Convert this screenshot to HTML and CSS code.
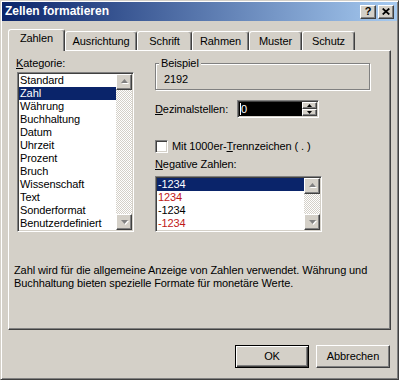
FILE: index.html
```html
<!DOCTYPE html>
<html lang="de">
  <head>
    <meta charset="UTF-8" />
    <title>Zellen formatieren</title>
    <link rel="stylesheet" href="styles.css">
  </head>
  <body>
    <div class="dialog">
      <div class="titlebar">
        <span class="title_text">Zellen formatieren</span>
        <div class="caption_buttons">
          <div class="caption_btn raised">?</div>
          <div class="caption_btn raised">
            <svg width="8" height="7" viewBox="0 0 8 7"><path d="M0.7 0.5 L7.3 6.5 M7.3 0.5 L0.7 6.5" stroke="#000" stroke-width="1.7" fill="none"/></svg>
          </div>
        </div>
      </div>

      <div class="dialog_body">
        <div class="tabs">
          <div class="tab tab_active tab_zahlen">Zahlen</div>
          <div class="tab tab_ausrichtung">Ausrichtung</div>
          <div class="tab tab_schrift">Schrift</div>
          <div class="tab tab_rahmen">Rahmen</div>
          <div class="tab tab_muster">Muster</div>
          <div class="tab tab_schutz">Schutz</div>
        </div>

        <div class="panel">
          <div class="panel_top">
            <div class="col_left">
              <div class="label"><u>K</u>ategorie:</div>
              <div class="listbox sunken list_cat">
                <ul class="items">
                  <li>Standard</li>
                  <li class="selected">Zahl</li>
                  <li>Währung</li>
                  <li>Buchhaltung</li>
                  <li>Datum</li>
                  <li>Uhrzeit</li>
                  <li>Prozent</li>
                  <li>Bruch</li>
                  <li>Wissenschaft</li>
                  <li>Text</li>
                  <li>Sonderformat</li>
                  <li>Benutzerdefiniert</li>
                </ul>
                <div class="scrollbar">
                  <div class="scroll_btn raised">
                    <svg width="14" height="14" viewBox="0 0 14 14"><path d="M5 9h7l-3.5-4z" fill="#fff"/><path d="M4 8h7l-3.5-4z" fill="#808080"/></svg>
                  </div>
                  <div class="scroll_track"></div>
                  <div class="scroll_btn raised">
                    <svg width="14" height="14" viewBox="0 0 14 14"><path d="M5 6h7l-3.5 4z" fill="#fff"/><path d="M4 5h7l-3.5 4z" fill="#808080"/></svg>
                  </div>
                </div>
              </div>
            </div>

            <div class="col_right">
              <fieldset class="group">
                <legend>Beispiel</legend>
                <div class="sample">2192</div>
              </fieldset>

              <div class="decimal_row">
                <span class="label"><u>D</u>ezimalstellen:</span>
                <div class="spin sunken">
                  <div class="spin_value"><span class="caret"></span>0</div>
                  <div class="spin_buttons">
                    <div class="spin_btn raised">
                      <svg width="5" height="3" viewBox="0 0 5 3"><path d="M0 3h5L2.5 0z" fill="#000"/></svg>
                    </div>
                    <div class="spin_btn raised">
                      <svg width="5" height="3" viewBox="0 0 5 3"><path d="M0 0h5L2.5 3z" fill="#000"/></svg>
                    </div>
                  </div>
                </div>
              </div>

              <div class="check_row">
                <span class="checkbox sunken"></span>
                <span class="label">Mit 1000er-<u>T</u>rennzeichen ( . )</span>
              </div>

              <div class="label neg_label"><u>N</u>egative Zahlen:</div>
              <div class="listbox sunken list_neg">
                <ul class="items">
                  <li class="selected">-1234</li>
                  <li class="red">1234</li>
                  <li>-1234</li>
                  <li class="red">-1234</li>
                </ul>
                <div class="scrollbar">
                  <div class="scroll_btn raised">
                    <svg width="14" height="14" viewBox="0 0 14 14"><path d="M5 9h7l-3.5-4z" fill="#fff"/><path d="M4 8h7l-3.5-4z" fill="#808080"/></svg>
                  </div>
                  <div class="scroll_track"></div>
                  <div class="scroll_btn raised">
                    <svg width="14" height="14" viewBox="0 0 14 14"><path d="M5 6h7l-3.5 4z" fill="#fff"/><path d="M4 5h7l-3.5 4z" fill="#808080"/></svg>
                  </div>
                </div>
              </div>
            </div>
          </div>

          <p class="desc">Zahl wird für die allgemeine Anzeige von Zahlen verwendet. Währung und<br>Buchhaltung bieten spezielle Formate für monetäre Werte.</p>
        </div>

        <div class="buttons">
          <div class="btn btn_default">OK</div>
          <div class="btn raised">Abbrechen</div>
        </div>
      </div>
    </div>
  </body>
</html>
```

FILE: styles.css
```css
html,
body {
  margin: 0;
  padding: 0;
  background: #d4d0c8;
}
body {
  font-family: "Liberation Sans", Arial, sans-serif;
  font-size: 11px;
  line-height: 13px;
  letter-spacing: -0.1px;
  color: #000;
}
u {
  text-decoration: underline;
  text-underline-offset: 1px;
}

/* 3d borders */
.raised {
  background: #d4d0c8;
  border: 1px solid;
  border-color: #fff #404040 #404040 #fff;
  box-shadow: inset -1px -1px #808080;
}
.sunken {
  border: 1px solid;
  border-color: #808080 #fff #fff #808080;
  box-shadow: inset 1px 1px #404040, inset -1px -1px #d4d0c8;
  padding: 1px;
}

.dialog {
  width: 399px;
  height: 380px;
  box-sizing: border-box;
  border: 1px solid;
  border-color: #d4d0c8 #404040 #404040 #d4d0c8;
  box-shadow: inset 1px 1px #fff, inset -1px -1px #808080;
  padding: 1px;
}

.titlebar {
  height: 19px;
  display: flex;
  align-items: center;
  justify-content: space-between;
  padding: 0 3px 0 3px;
  background: linear-gradient(to right, #0a246a, #a6caf0);
}
.title_text {
  color: #fff;
  font-weight: bold;
  font-size: 12px;
  letter-spacing: 0;
}
.caption_buttons {
  display: flex;
  gap: 2px;
}
.caption_btn {
  width: 16px;
  height: 14px;
  box-sizing: border-box;
  display: flex;
  align-items: center;
  justify-content: center;
  font-weight: bold;
  font-size: 11px;
}

.dialog_body {
  padding: 8px 0 0 6px;
}

/* tabs */
.tabs {
  display: flex;
  align-items: flex-end;
  height: 21px;
}
.tab {
  height: 19px;
  box-sizing: border-box;
  background: #d4d0c8;
  border-top: 1px solid #fff;
  border-left: 1px solid #fff;
  border-right: 1px solid #404040;
  box-shadow: inset -1px 0 #808080;
  border-radius: 3px 3px 0 0;
  display: flex;
  justify-content: center;
  padding-top: 3px;
}
.tab_active {
  height: 22px;
  margin-bottom: -1px;
  padding-top: 2px;
  position: relative;
  z-index: 1;
}
.tab_zahlen { width: 57px; }
.tab_ausrichtung { width: 72px; }
.tab_schrift { width: 55px; }
.tab_rahmen { width: 57px; }
.tab_muster { width: 53px; }
.tab_schutz { width: 53px; }

.panel {
  width: 383px;
  height: 280px;
  box-sizing: border-box;
  border: 1px solid;
  border-color: #fff #404040 #404040 #fff;
  box-shadow: inset -1px -1px #808080;
  padding-top: 6px;
}
.panel_top {
  display: flex;
  padding-left: 7px;
}

.col_left {
  width: 118px;
}
.label {
  white-space: nowrap;
}

/* list boxes */
.listbox {
  display: flex;
  background: #fff;
  box-sizing: border-box;
  overflow: hidden;
}
.list_cat {
  width: 117px;
  height: 160px;
  margin: 2px 0 0 1px;
}
.list_neg {
  width: 167px;
  height: 56px;
  margin-top: 5px;
}
.items {
  list-style: none;
  margin: 0;
  padding: 0;
  flex: 1;
  overflow: hidden;
}
.items li {
  height: 13px;
  padding-left: 1px;
  white-space: nowrap;
}
.items li.selected {
  background: #0a246a;
  color: #fff;
}
.items li.red {
  color: #c01818;
}
.scrollbar {
  width: 16px;
  display: flex;
  flex-direction: column;
}
.scroll_btn {
  width: 16px;
  height: 16px;
  box-sizing: border-box;
  display: flex;
}
.scroll_track {
  flex: 1;
  background: repeating-conic-gradient(#fff 0 25%, #d4d0c8 0 50%) 0 0 / 2px 2px;
}

.col_right {
  margin-left: 21px;
}

/* group box */
.group {
  width: 215px;
  box-sizing: border-box;
  margin: 0;
  padding: 0 0 3px 0;
  border: 1px solid #808080;
  box-shadow: inset 1px 1px #fff, 1px 1px #fff;
}
.group legend {
  margin-left: 3px;
  padding: 0 2px;
  background: #d4d0c8;
}
.sample {
  margin: 3px 0 0 8px;
}

.decimal_row {
  display: flex;
  align-items: center;
  margin-top: 10px;
  height: 18px;
}
.decimal_row .label {
  width: 82px;
}
.spin {
  width: 82px;
  height: 18px;
  box-sizing: border-box;
  background: #fff;
  display: flex;
}
.spin_value {
  flex: 1;
  background: #000;
  color: #fff;
  display: flex;
  align-items: center;
  padding-left: 1px;
}
.caret {
  width: 1px;
  height: 12px;
  background: #fff;
}
.spin_buttons {
  width: 15px;
  display: flex;
  flex-direction: column;
}
.spin_btn {
  flex: 1;
  box-sizing: border-box;
  display: flex;
  align-items: center;
  justify-content: center;
}

.check_row {
  display: flex;
  align-items: center;
  gap: 4px;
  margin-top: 22px;
}
.checkbox {
  width: 13px;
  height: 13px;
  box-sizing: border-box;
  background: #fff;
}
.neg_label {
  margin-top: 5px;
}

.desc {
  margin: 32px 0 0 0;
  padding-left: 5px;
  white-space: nowrap;
}

/* bottom buttons */
.buttons {
  display: flex;
  justify-content: flex-end;
  gap: 7px;
  width: 382px;
  margin-top: 15px;
}
.btn {
  width: 74px;
  height: 23px;
  box-sizing: border-box;
  display: flex;
  align-items: center;
  justify-content: center;
}
.btn_default {
  background: #d4d0c8;
  border: 1px solid #000;
  box-shadow: inset 1px 1px #fff, inset -1px -1px #404040, inset -2px -2px #808080;
}
```
